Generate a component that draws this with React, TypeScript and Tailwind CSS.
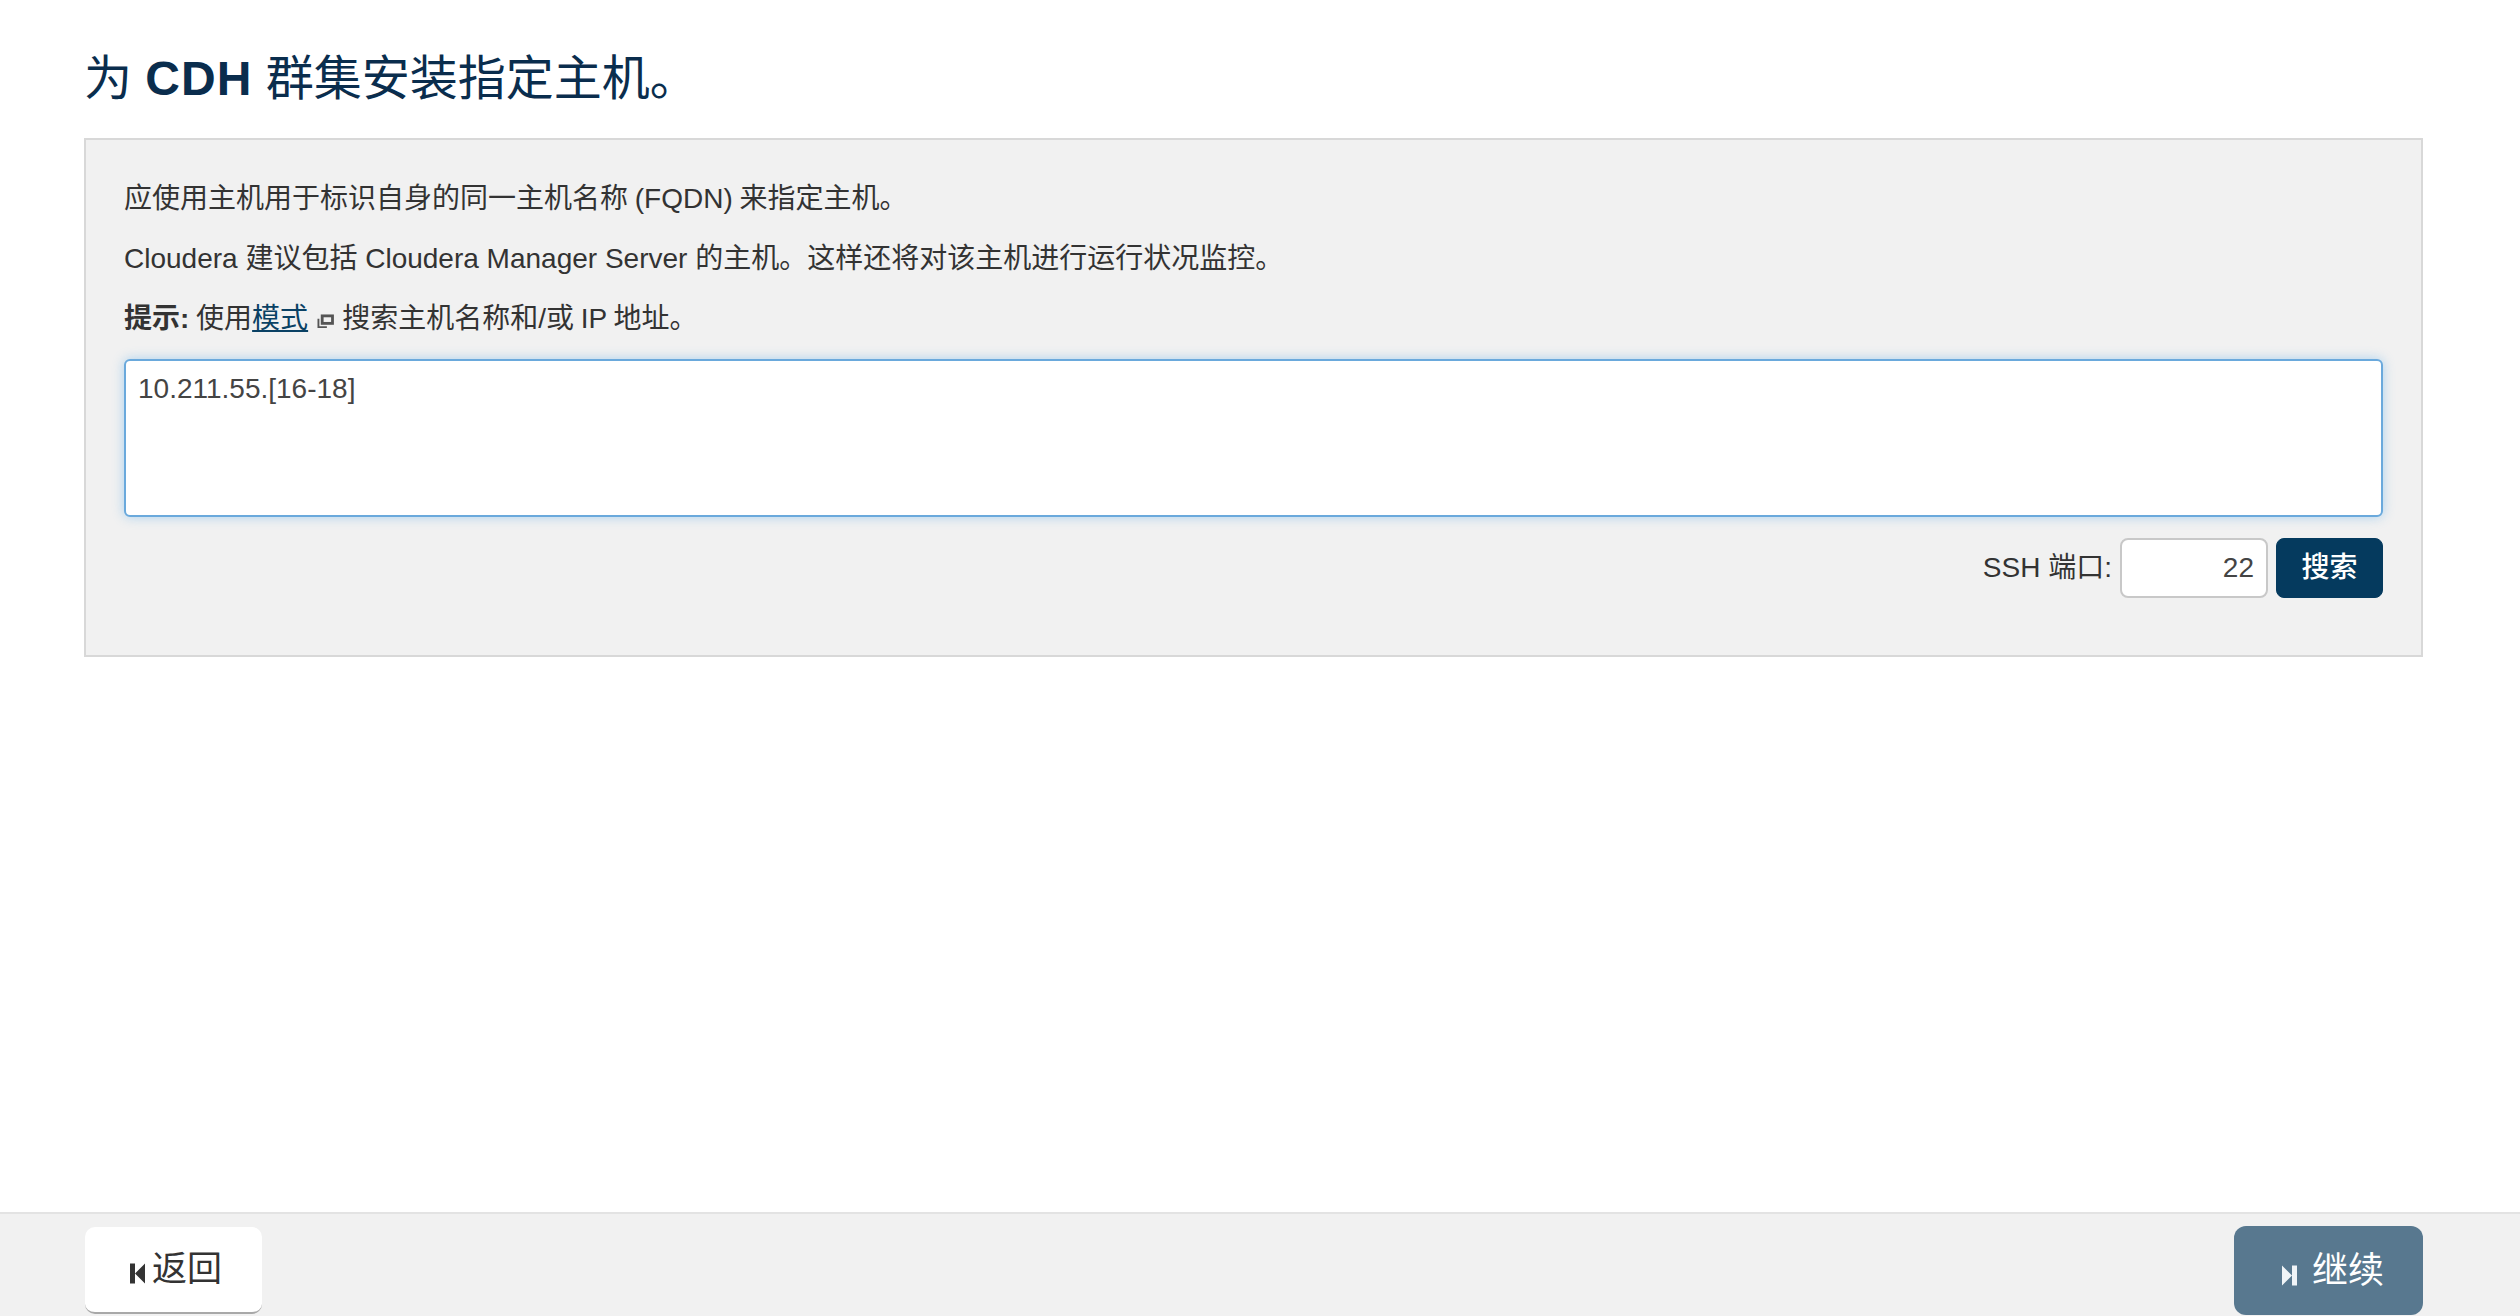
import { useState } from "react";

const fontStack = "font-['Liberation_Sans','Noto_Sans_CJK_SC',sans-serif]";

function SkipIcon({ dir, className }: { dir: "back" | "next"; className: string }) {
  return (
    <svg viewBox="0 0 15 20" className={className} fill="currentColor" aria-hidden>
      {dir === "back" ? (
        <path d="M0 0h5v20H0zM15 0v20L5 10z" />
      ) : (
        <path d="M10 0h5v20h-5zM0 0v20l10-10z" />
      )}
    </svg>
  );
}

function ExternalIcon() {
  return (
    <svg viewBox="0 0 18 16" className="mx-[8px] inline-block h-[15px] w-[18px] align-[-1px] text-[#555]" fill="none" stroke="currentColor" aria-hidden>
      <path strokeWidth="2" d="M2 5v9h9" />
      <rect x="6" y="2" width="11" height="8" strokeWidth="3" />
    </svg>
  );
}

export default function App() {
  const [hosts, setHosts] = useState("10.211.55.[16-18]");
  const [port, setPort] = useState("22");

  return (
    <div className={`flex h-[1316px] flex-col overflow-hidden bg-white ${fontStack}`}>
      <main className="flex-1 pr-[97px] pl-[84px]">
        <h1 className="pt-[45px] pb-[26px] text-[48px] leading-[67px] font-normal text-[#0a2d4d]">
          为 <span className="font-bold tracking-[1px]">CDH</span> 群集安装指定主机。
        </h1>

        <section className="h-[519px] border-2 border-[#d8d8d8] bg-[#f1f1f1] px-[38px] pt-[36px] text-[28px] text-[#333]">
          <p className="h-[60px] leading-[46px] [word-spacing:-1px]">应使用主机用于标识自身的同一主机名称 (FQDN) 来指定主机。</p>
          <p className="h-[60px] leading-[46px]">Cloudera 建议包括 Cloudera Manager Server 的主机。这样还将对该主机进行运行状况监控。</p>
          <p className="h-[63px] leading-[46px] [word-spacing:-1px]">
            <strong className="font-semibold">提示:</strong> 使用
            <a href="#" className="text-[#0a4164] underline">模式</a>
            <ExternalIcon />
            搜索主机名称和/或 IP 地址。
          </p>

          <textarea
            className="block h-[158px] w-full resize-none rounded-[6px] border-2 border-[#6aa9dc] bg-white px-[12px] py-[8px] text-[28px] leading-[40px] text-[#444] shadow-[0_0_12px_rgba(82,168,236,0.45)] outline-none"
            value={hosts}
            onChange={(event) => setHosts(event.target.value)}
          />

          <div className="mt-[21px] flex items-center justify-end gap-[8px]">
            <label className="text-[28px] text-[#333]">SSH 端口:</label>
            <input
              className="h-[60px] w-[148px] rounded-[8px] border-2 border-[#c8c8c8] bg-white px-[12px] text-right text-[28px] text-[#444] outline-none"
              value={port}
              onChange={(event) => setPort(event.target.value)}
            />
            <button className="h-[60px] w-[107px] rounded-[8px] border border-[#053a5e] bg-[#053a5e] text-[28px] font-medium text-white" type="button">
              搜索
            </button>
          </div>
        </section>
      </main>

      <footer className="flex h-[104px] items-start justify-between border-t-2 border-[#e3e3e3] bg-[#f1f1f1] pt-[13px] pr-[97px] pl-[85px]">
        <button className="flex h-[87px] w-[177px] items-center justify-center rounded-[10px] border-b-2 border-[#a8a8a8] bg-white pl-[5px] text-[35px] text-[#333]" type="button">
          <SkipIcon dir="back" className="mt-[7px] mr-[7px] h-[21px] w-[15px] text-[#333]" />
          返回
        </button>
        <button className="-mt-px flex h-[89px] w-[189px] items-center justify-center rounded-[12px] bg-[#58788f] text-[36px] text-white" type="button">
          <SkipIcon dir="next" className="mt-[9px] mr-[15px] ml-[9px] h-[21px] w-[15px] text-[#f0f4f7]" />
          继续
        </button>
      </footer>
    </div>
  );
}
